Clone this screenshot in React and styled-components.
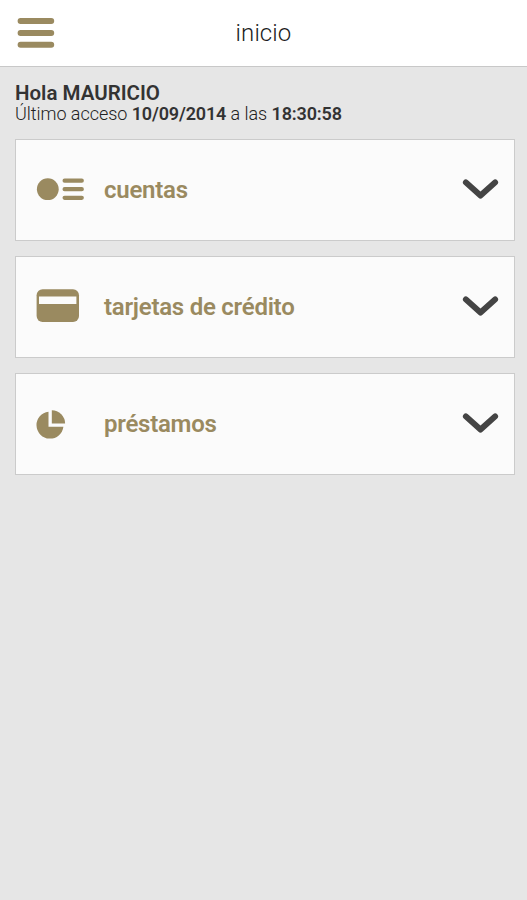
import React from "react";
import styled, { createGlobalStyle } from "styled-components";

const GOLD = "#9a8a60";

const GlobalStyle = createGlobalStyle`
  * { box-sizing: border-box; }
  body {
    margin: 0;
    background: #e6e6e6;
    font-family: Roboto, "Liberation Sans", sans-serif;
  }
`;

const Screen = styled.div`
  display: flex;
  flex-direction: column;
  min-height: 100vh;
  background: #e6e6e6;
`;

const Header = styled.header`
  display: grid;
  grid-template-columns: 72px 1fr 72px;
  align-items: center;
  height: 67px;
  background: #fff;
  border-bottom: 1px solid #c8c8c8;
`;

const MenuButton = styled.button`
  display: flex;
  height: 66px;
  padding: 0 0 0 17px;
  align-items: center;
  border: 0;
  background: none;
`;

const Title = styled.h1`
  margin: 0;
  color: #1c1c1c;
  font-size: 24px;
  font-weight: 300;
  line-height: 28px;
  letter-spacing: 0.1px;
  text-align: center;
`;

const Greeting = styled.section`
  padding: 14px 15px 0;
  height: 72px;
  color: #333;
`;

const UserName = styled.div`
  font-size: 20.5px;
  font-weight: 600;
  line-height: 24px;
`;

const LastAccess = styled.div`
  color: #222;
  font-size: 18px;
  font-weight: 300;
  line-height: 18px;
  letter-spacing: -0.04px;
  white-space: nowrap;

  b {
    color: #333;
    font-weight: 600;
    letter-spacing: -0.15px;
  }
`;

const CardList = styled.main`
  display: flex;
  flex-direction: column;
  gap: 15px;
  padding: 0 12px 0 15px;
`;

const Card = styled.button`
  display: grid;
  grid-template-columns: 68px 1fr 37px;
  align-items: center;
  height: 102px;
  padding: 0 15px 1px 20px;
  border: 1px solid #cbcbcb;
  background: #fbfbfb;
  font-family: inherit;
  text-align: left;
`;

const CardLabel = styled.span`
  padding-top: 1px;
  color: ${GOLD};
  font-size: 24px;
  font-weight: 600;
  line-height: 30px;
  letter-spacing: -0.25px;
`;

const Icon = styled.svg`
  display: block;
`;

const MenuIcon = () => (
  <Icon width="38" height="30" viewBox="0 0 38 30" stroke={GOLD} strokeWidth="6" strokeLinecap="round">
    <path d="M3.6 3h30.6M3.6 15h30.6M3.6 26.7h30.6" />
  </Icon>
);

const AccountsIcon = () => (
  <Icon width="50" height="25" viewBox="0 0 50 25">
    <circle cx="11.8" cy="12.2" r="10.9" fill={GOLD} />
    <path d="M28.6 3.7h17.2M28.6 12.2h17.2M28.6 20.8h17.2" stroke={GOLD} strokeWidth="4.2" strokeLinecap="round" />
  </Icon>
);

const CreditCardIcon = () => (
  <Icon width="44" height="35" viewBox="0 0 44 35">
    <rect x=".6" y=".2" width="42.4" height="32.8" rx="6" fill={GOLD} />
    <rect x="3" y="7.5" width="37.4" height="7.5" fill="#fbfbfb" />
  </Icon>
);

const LoansIcon = () => (
  <Icon width="30" height="31" viewBox="0 0 30 31" fill={GOLD}>
    <path d="M12.5 3.7A13.5 13.5 0 1 0 27.4 18.7H12.5Z" />
    <path d="M15.8 2.3A13.3 13.3 0 0 1 29.1 15.6H15.8Z" />
  </Icon>
);

const ChevronIcon = () => (
  <Icon width="37" height="23" viewBox="0 0 37 23" fill="#444">
    <path d="M1.6 2.4Q3.6.3 5.9 2.2L18.5 13.4 31.1 2.2Q33.4.3 35.4 2.4 37.2 4.7 35.2 6.5L20.5 19.8Q18.5 21.6 16.5 19.8L1.8 6.5Q-.2 4.7 1.6 2.4Z" />
  </Icon>
);

const sections = [
  { label: "cuentas", Glyph: AccountsIcon },
  { label: "tarjetas de crédito", Glyph: CreditCardIcon },
  { label: "préstamos", Glyph: LoansIcon },
];

export default function App() {
  return (
    <>
      <GlobalStyle />
      <Screen>
        <Header>
          <MenuButton aria-label="Menú"><MenuIcon /></MenuButton>
          <Title>inicio</Title>
        </Header>
        <Greeting>
          <UserName>Hola MAURICIO</UserName>
          <LastAccess>
            Último acceso <b>10/09/2014</b> a las <b>18:30:58</b>
          </LastAccess>
        </Greeting>
        <CardList>
          {sections.map(({ label, Glyph }) => (
            <Card key={label}>
              <Glyph />
              <CardLabel>{label}</CardLabel>
              <ChevronIcon />
            </Card>
          ))}
        </CardList>
      </Screen>
    </>
  );
}
